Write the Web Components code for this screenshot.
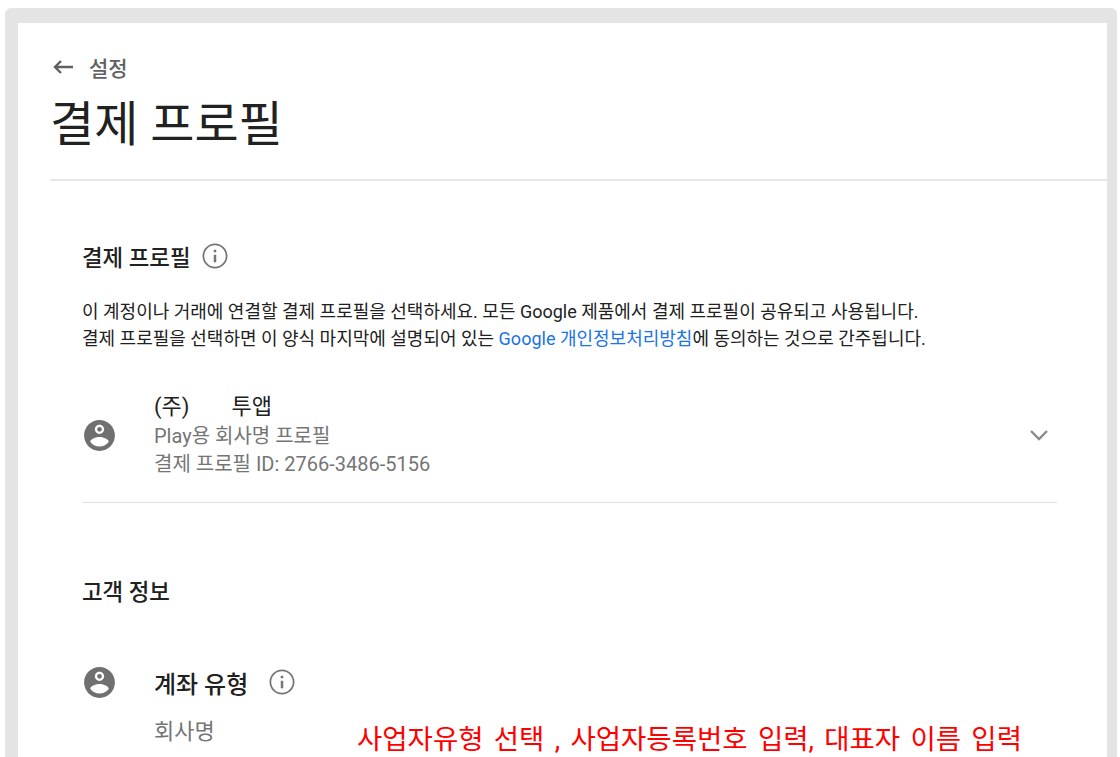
<!DOCTYPE html>
<html lang="ko">
<head>
<meta charset="utf-8">
<title>결제 프로필</title>
<style>
    html, body { margin: 0; height: 100%; background: #fff; overflow: hidden; }
    body { font-family: Roboto, "Noto Sans CJK KR", sans-serif; color: #212121; }
    a { color: #1a73e8; text-decoration: none; }
</style>
</head>
<body>
<billing-page>
    <page-header back="설정" title="결제 프로필"></page-header>
    <billing-section heading="결제 프로필" info>
        <p slot="intro">이 계정이나 거래에 연결할 결제 프로필을 선택하세요. 모든 Google 제품에서 결제 프로필이 공유되고 사용됩니다.<br>결제 프로필을 선택하면 이 양식 마지막에 설명되어 있는 <a href="#">Google 개인정보처리방침</a>에 동의하는 것으로 간주됩니다.</p>
        <profile-row name="(주)" suffix="투앱" line1="Play용 회사명 프로필" line2="결제 프로필 ID: 2766-3486-5156"></profile-row>
    </billing-section>
    <customer-info heading="고객 정보" label="계좌 유형" value="회사명"></customer-info>
    <red-note>사업자유형 선택 , 사업자등록번호 입력, 대표자 이름 입력</red-note>
</billing-page>

<script>
// shared icons
const ICON_INFO = `<svg viewBox="0 0 24 24" width="30" height="30" fill="#757575"><path d="M11 7h2v2h-2zm0 4h2v6h-2zm1-9C6.48 2 2 6.48 2 12s4.48 10 10 10 10-4.48 10-10S17.52 2 12 2zm0 18.6c-4.74 0-8.6-3.86-8.6-8.6S7.26 3.4 12 3.4s8.6 3.86 8.6 8.6-3.86 8.6-8.6 8.6z"/></svg>`;
const ICON_ACCOUNT = `<svg viewBox="0 0 24 24" width="37" height="37" fill="#707070"><path d="M12 2C6.48 2 2 6.48 2 12s4.48 10 10 10 10-4.48 10-10S17.52 2 12 2zm0 3c1.66 0 3 1.34 3 3s-1.34 3-3 3-3-1.34-3-3 1.34-3 3-3zm0 14.2c-2.5 0-4.71-1.28-6-3.22.03-1.99 4-3.08 6-3.08 1.99 0 5.97 1.09 6 3.08-1.29 1.94-3.5 3.22-6 3.22z"/><circle cx="12" cy="8" r="1.5"/></svg>`;

// outer grey frame with the white card in it
class BillingPage extends HTMLElement {
    constructor() {
        super();
        this.attachShadow({ mode: 'open' });
        this.shadowRoot.innerHTML = `
            <style>
                :host {
                    display: block;
                    position: relative;
                    height: 749px;
                    margin: 8px 3px 0 5px;
                    padding: 15px 10px 0 13px;
                    box-sizing: border-box;
                    background: #e4e4e4;
                    border-radius: 6px 6px 0 0;
                    overflow: hidden;
                }
                .card { background: #fff; height: 100%; overflow: hidden; }
            </style>
            <div class="card"><slot></slot></div>
        `;
    }
}

class PageHeader extends HTMLElement {
    constructor() {
        super();
        this.attachShadow({ mode: 'open' });
    }
    connectedCallback() {
        this.shadowRoot.innerHTML = `
            <style>
                :host { display: block; margin-left: 32px; height: 156px; border-bottom: 2px solid #e6e6e6; }
                .back { display: flex; align-items: center; gap: 16px; padding: 30px 0 0 3px; height: 28px; color: #616161; font-size: 21px; font-weight: 500; }
                h1 { margin: 14px 0 0; font-size: 48px; line-height: 60px; font-weight: 400; color: #212121; }
            </style>
            <div class="back">
                <svg viewBox="0 0 20 14" width="20" height="14" fill="none" stroke="#616161" stroke-width="2.4"><path d="M20 7H2M8 1L2 7l6 6"/></svg>
                <span>${this.getAttribute('back')}</span>
            </div>
            <h1>${this.getAttribute('title')}</h1>
        `;
    }
}

class BillingSection extends HTMLElement {
    constructor() {
        super();
        this.attachShadow({ mode: 'open' });
    }
    connectedCallback() {
        this.shadowRoot.innerHTML = `
            <style>
                :host { display: block; margin: 0 50px 0 64px; }
                h2 { display: flex; align-items: center; gap: 9px; margin: 0; padding-top: 55px; height: 40px; font-size: 22.4px; font-weight: 500; color: #212121; }
                ::slotted(p) { margin: 22px 0 0; font-size: 18px; line-height: 27px; color: #212121; }
            </style>
            <h2>${this.getAttribute('heading')}${ICON_INFO}</h2>
            <slot name="intro"></slot>
            <slot></slot>
        `;
    }
}

class ProfileRow extends HTMLElement {
    constructor() {
        super();
        this.attachShadow({ mode: 'open' });
    }
    connectedCallback() {
        this.shadowRoot.innerHTML = `
            <style>
                :host { display: flex; align-items: center; margin-top: 40px; padding-bottom: 24px; border-bottom: 1px solid #e0e0e0; }
                .icon { width: 72px; flex: none; display: flex; margin-left: -1px; margin-right: 1px; }
                .text { flex: 1; }
                .name { font-size: 22px; line-height: 30px; color: #212121; display: flex; gap: 42px; }
                .sub { font-size: 20px; line-height: 28px; color: #757575; }
                .chev { margin-right: 8px; display: flex; }
            </style>
            <div class="icon">${ICON_ACCOUNT}</div>
            <div class="text">
                <div class="name"><span>${this.getAttribute('name')}</span><span>${this.getAttribute('suffix')}</span></div>
                <div class="sub">${this.getAttribute('line1')}</div>
                <div class="sub">${this.getAttribute('line2')}</div>
            </div>
            <div class="chev"><svg viewBox="0 0 20 12" width="20" height="12" fill="none" stroke="#8a8a8a" stroke-width="2.4"><path d="M2 2l8 8 8-8"/></svg></div>
        `;
    }
}

class CustomerInfo extends HTMLElement {
    constructor() {
        super();
        this.attachShadow({ mode: 'open' });
    }
    connectedCallback() {
        this.shadowRoot.innerHTML = `
            <style>
                :host { display: block; margin: 0 50px 0 64px; }
                h2 { margin: 0; padding-top: 71px; font-size: 22.4px; line-height: 36px; font-weight: 500; color: #212121; }
                .row { display: flex; margin-top: 54px; }
                .icon { width: 72px; flex: none; display: flex; align-items: flex-start; margin-left: -1px; margin-right: 1px; }
                .label { display: flex; align-items: center; gap: 19px; height: 36px; font-size: 24px; font-weight: 500; color: #212121; }
                .value { margin-top: 17px; font-size: 22px; line-height: 30px; color: #757575; }
            </style>
            <h2>${this.getAttribute('heading')}</h2>
            <div class="row">
                <div class="icon">${ICON_ACCOUNT}</div>
                <div>
                    <div class="label">${this.getAttribute('label')}${ICON_INFO}</div>
                    <div class="value">${this.getAttribute('value')}</div>
                </div>
            </div>
        `;
    }
}

// annotation painted over the screenshot
class RedNote extends HTMLElement {
    constructor() {
        super();
        this.attachShadow({ mode: 'open' });
        this.shadowRoot.innerHTML = `
            <style>
                :host { position: absolute; left: 352px; top: 714px; font-size: 27.5px; word-spacing: 3.5px; line-height: 36px; color: #f00; white-space: nowrap; }
            </style>
            <slot></slot>
        `;
    }
}

customElements.define('billing-page', BillingPage);
customElements.define('page-header', PageHeader);
customElements.define('billing-section', BillingSection);
customElements.define('profile-row', ProfileRow);
customElements.define('customer-info', CustomerInfo);
customElements.define('red-note', RedNote);
</script>
</body>
</html>
